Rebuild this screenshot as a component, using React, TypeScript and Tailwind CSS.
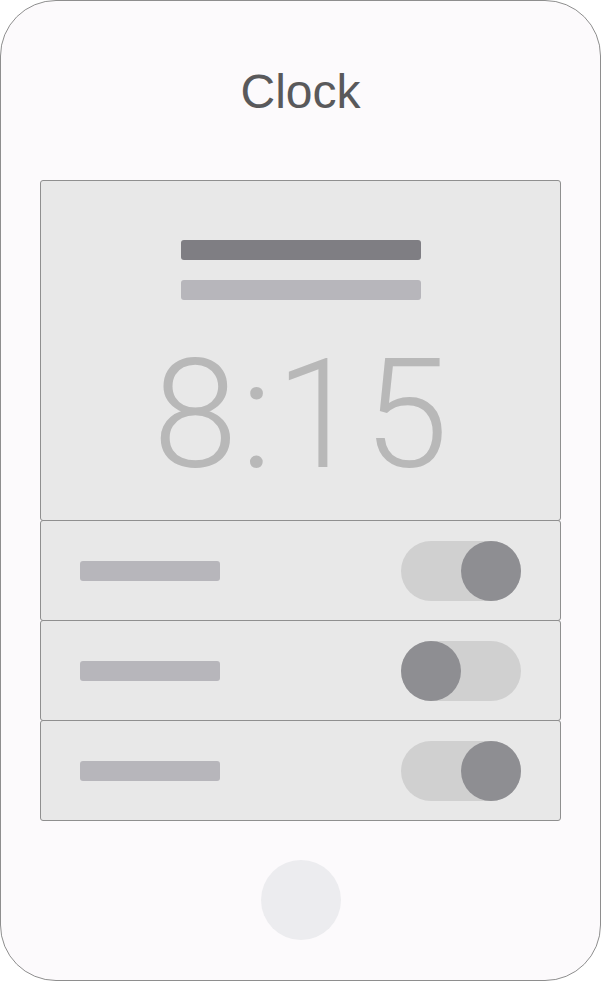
const Toggle = ({ on }: { on: boolean }) => (
  <div
    className={`flex h-[60px] w-[120px] rounded-full bg-[#d0d0d0] ${
      on ? "justify-end" : "justify-start"
    }`}
  >
    <div className="h-[60px] w-[60px] rounded-full bg-[#8e8e92]" />
  </div>
);

const SettingRow = ({ on }: { on: boolean }) => (
  <div className="-mt-px flex h-[101px] items-center justify-between rounded-[3px] border border-[#8f8f8f] bg-[#e8e8e8] pl-[39px] pr-[39px]">
    <div className="h-[20px] w-[140px] rounded-[3px] bg-[#b7b6bb]" />
    <Toggle on={on} />
  </div>
);

export default function App() {
  return (
    <div className="h-[981px] w-[601px] bg-white font-['Liberation_Sans',Arial,sans-serif]">
      <div className="flex h-[981px] w-[601px] flex-col rounded-[56px] border border-[#8e8e8e] bg-[#fcfafc]">
        <div className="flex h-[179px] justify-center pt-[67px]">
          <h1 className="text-[48px] leading-none text-[#59595b]">Clock</h1>
        </div>

        <div className="mx-[39px] flex flex-col">
          <div className="flex h-[341px] flex-col items-center rounded-[3px] border border-[#8f8f8f] bg-[#e8e8e8] pt-[59px]">
            <div className="h-[20px] w-[240px] rounded-[3px] bg-[#7f7e83]" />
            <div className="mt-[20px] h-[20px] w-[240px] rounded-[3px] bg-[#b7b6bb]" />
            <div className="mt-[38px] pl-[3px] font-['Roboto',sans-serif] text-[153px] font-light leading-none tracking-[3px] text-[#b8b8b8]">
              8:15
            </div>
          </div>
          <SettingRow on={true} />
          <SettingRow on={false} />
          <SettingRow on={true} />
        </div>

        <div className="mt-[39px] flex justify-center">
          <div className="h-[80px] w-[80px] rounded-full bg-[#ececef]" />
        </div>
      </div>
    </div>
  );
}
